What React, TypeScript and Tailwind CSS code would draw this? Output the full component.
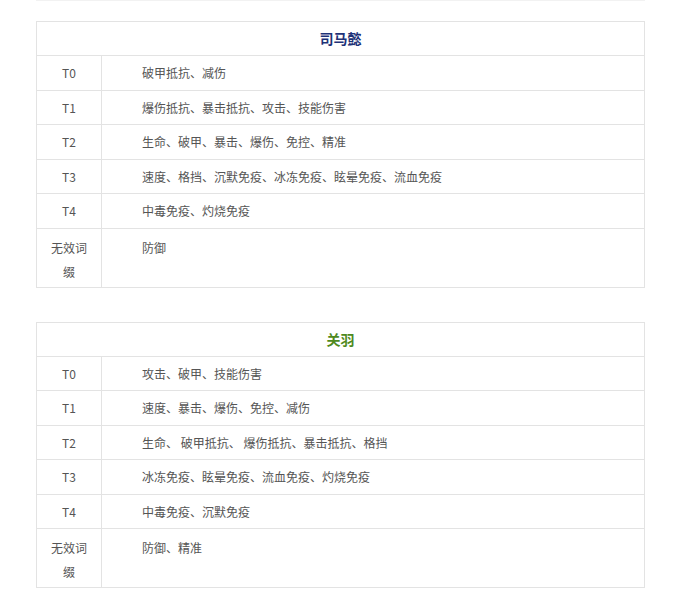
import React from "react";

type Row = { t: string; v: string };

const font = { fontFamily: '"Microsoft YaHei", "Noto Sans CJK SC", "Liberation Sans", sans-serif' };

const tables: { name: string; color: string; rows: Row[] }[] = [
  {
    name: "司马懿",
    color: "text-[#1e3278]",
    rows: [
      { t: "T0", v: "破甲抵抗、减伤" },
      { t: "T1", v: "爆伤抵抗、暴击抵抗、攻击、技能伤害" },
      { t: "T2", v: "生命、破甲、暴击、爆伤、免控、精准" },
      { t: "T3", v: "速度、格挡、沉默免疫、冰冻免疫、眩晕免疫、流血免疫" },
      { t: "T4", v: "中毒免疫、灼烧免疫" },
      { t: "无效词缀", v: "防御" },
    ],
  },
  {
    name: "关羽",
    color: "text-[#4f8a1e]",
    rows: [
      { t: "T0", v: "攻击、破甲、技能伤害" },
      { t: "T1", v: "速度、暴击、爆伤、免控、减伤" },
      { t: "T2", v: "生命、 破甲抵抗、 爆伤抵抗、暴击抵抗、格挡" },
      { t: "T3", v: "冰冻免疫、眩晕免疫、流血免疫、灼烧免疫" },
      { t: "T4", v: "中毒免疫、沉默免疫" },
      { t: "无效词缀", v: "防御、精准" },
    ],
  },
];

function Table({ name, color, rows }: { name: string; color: string; rows: Row[] }) {
  return (
    <div className="w-[609px] border border-[#e3e3e3]">
      <div className={`h-[33px] flex items-center justify-center text-[14px] font-bold ${color}`}>
        {name}
      </div>
      {rows.map((r) => {
        const last = r.t === "无效词缀";
        return (
          <div key={r.t} className="flex border-t border-[#e3e3e3] text-[12px] text-[#555]">
            <div
              className={`w-[65px] shrink-0 border-r border-[#e3e3e3] text-center ${
                last ? "px-[10px] pt-[7px] pb-[3px] leading-[24px]" : "h-[33.5px] leading-[33.5px]"
              }`}
            >
              {r.t}
            </div>
            <div
              className={`flex-1 pl-[40px] ${last ? "pt-[7px] leading-[24px]" : "h-[33.5px] leading-[33.5px]"}`}
            >
              {r.v}
            </div>
          </div>
        );
      })}
    </div>
  );
}

export default function App() {
  return (
    <div className="w-[673px] h-[605px] bg-white" style={font}>
      <div className="ml-[36px] w-[609px] border-t border-[#f2f2f2]" />
      <div className="pl-[36px] pt-[20px] flex flex-col gap-[34px]">
        {tables.map((t) => (
          <Table key={t.name} {...t} />
        ))}
      </div>
    </div>
  );
}
